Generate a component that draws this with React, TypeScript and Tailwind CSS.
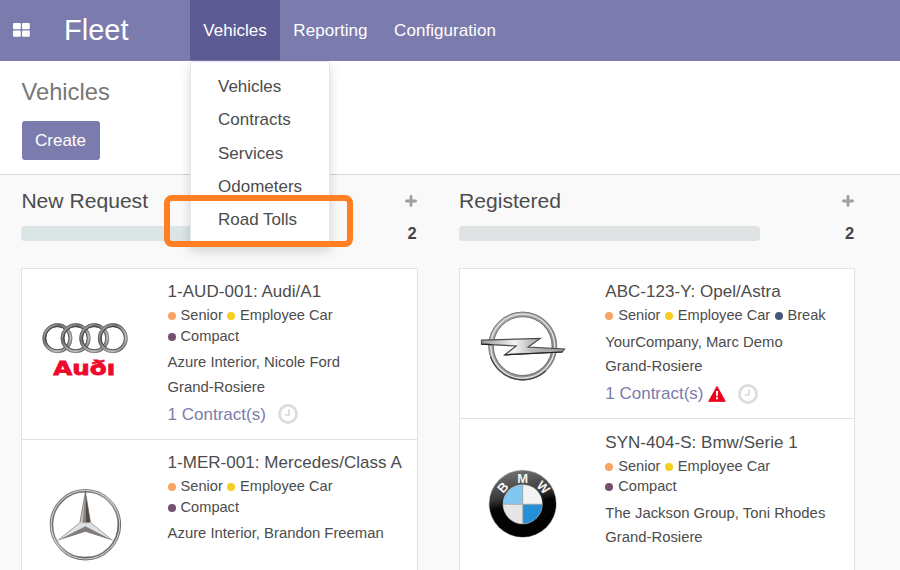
import React from "react";

type Tag = { label: string; color: string };
type Vehicle = {
  title: string;
  tags: Tag[];
  driver: string;
  place: string;
  contract?: boolean;
  alert?: boolean;
  logo: React.ReactNode;
  size: string;
};

const senior: Tag = { label: "Senior", color: "bg-[#f9a464]" };
const employee: Tag = { label: "Employee Car", color: "bg-[#f7cd1f]" };
const compact: Tag = { label: "Compact", color: "bg-[#774f70]" };
const breakTag: Tag = { label: "Break", color: "bg-[#475577]" };

function AudiLogo() {
  return (
    <svg width="128" height="128" viewBox="0.8 0.6 128 128" className="block">
      <defs>
        <linearGradient id="ring" x1="0" y1="0" x2="1" y2="1">
          <stop offset="0" stopColor="#a5a5a5" />
          <stop offset="0.3" stopColor="#555" />
          <stop offset="0.5" stopColor="#8a8a8a" />
          <stop offset="0.75" stopColor="#b5b5b5" />
          <stop offset="1" stopColor="#3c3c3c" />
        </linearGradient>
      </defs>
      {[36.2, 54.4, 73, 91.6].map((cx) => (
        <g key={cx} fill="none">
          <circle cx={cx} cy="47.8" r="13.1" stroke="url(#ring)" strokeWidth="3.6" />
          <circle cx={cx} cy="47.8" r="11.6" stroke="#333" strokeWidth="0.8" />
          <circle cx={cx} cy="47.8" r="13.4" stroke="#ddd" strokeWidth="0.6" opacity="0.6" />
          <circle cx={cx} cy="47.8" r="14.6" stroke="#666" strokeWidth="0.6" />
        </g>
      ))}
      <text
        x="32"
        y="84.9"
        textLength="62"
        lengthAdjust="spacingAndGlyphs"
        fontFamily="DejaVu Sans, sans-serif"
        fontWeight="700"
        fontSize="20"
        fill="#ee0a2c"
        stroke="#ee0a2c"
        strokeWidth="0.8"
      >
        Auðı
      </text>
    </svg>
  );
}

function MercedesLogo() {
  return (
    <svg width="128" height="128" viewBox="0.3 0.3 128 128" className="block">
      <defs>
        <linearGradient id="mring" x1="0" y1="0" x2="0.9" y2="1">
          <stop offset="0" stopColor="#8d8d8d" />
          <stop offset="0.25" stopColor="#77716d" />
          <stop offset="0.5" stopColor="#a5a5a5" />
          <stop offset="0.8" stopColor="#66605d" />
          <stop offset="1" stopColor="#999" />
        </linearGradient>
      </defs>
      <circle cx="63.7" cy="63" r="33.9" fill="none" stroke="url(#mring)" strokeWidth="3.6" />
      <circle cx="63.7" cy="63" r="34.3" fill="none" stroke="#d5d9dc" strokeWidth="1" />
      <path d="M63.7 30 L58.2 60.8 L63.7 63 Z" fill="#c4c1bf" />
      <path d="M63.7 30 L68.8 60.8 L63.7 63 Z" fill="#514b48" />
      <path d="M63.7 30 L61 61 L63.7 63 Z" fill="#85807c" />
      <path d="M36 78.8 L58.2 60.8 L68.8 60.8 L91 78.8 L63.7 69.5 Z" fill="#c5c6c8" />
      <path d="M36 78.8 L58.2 60.8 L63.7 62.2 L68.8 60.8 L91 78.8 L63.7 65.2 Z" fill="#dfe2e4" />
      <path d="M36 78.8 L63.7 64.6 L91 78.8 L63.7 70 Z" fill="#827d7a" />
      <path d="M36 78.8 L58.2 60.8 M68.8 60.8 L91 78.8" stroke="#97928e" strokeWidth="0.8" />
      <path d="M63.7 30 L58.2 60.8 M63.7 30 L68.8 60.8" stroke="#57514e" strokeWidth="0.6" />
    </svg>
  );
}

function OpelLogo() {
  return (
    <svg width="128" height="128" viewBox="0.3 0 128 128" className="block">
      <defs>
        <linearGradient id="oring" x1="0" y1="0" x2="1" y2="1">
          <stop offset="0" stopColor="#b5b5b5" />
          <stop offset="0.5" stopColor="#989898" />
          <stop offset="1" stopColor="#8c8c8c" />
        </linearGradient>
        <linearGradient id="bolt" x1="0" y1="0" x2="1" y2="0">
          <stop offset="0" stopColor="#9a9a9a" />
          <stop offset="0.4" stopColor="#f3f3f3" />
          <stop offset="0.6" stopColor="#bbb" />
          <stop offset="1" stopColor="#999" />
        </linearGradient>
      </defs>
      <g fill="none">
        <circle cx="63" cy="55.1" r="31.8" stroke="url(#oring)" strokeWidth="5" />
        <circle cx="63" cy="55.1" r="34" stroke="#777" strokeWidth="0.9" />
        <circle cx="63" cy="55.1" r="32" stroke="#e2e2e2" strokeWidth="1.3" />
        <circle cx="63" cy="55.1" r="29.4" stroke="#666" strokeWidth="0.9" />
        <path d="M31 66 A34 34 0 0 0 86 80" stroke="#444" strokeWidth="1.1" />
      </g>
      <path
        d="M21.8 49.2 L80.5 47.4 L68.5 56 L104.8 58 L102.6 61 L45 63.8 L56.5 55 L21.8 53.2 Z"
        fill="url(#bolt)"
        stroke="#4b4b4b"
        strokeWidth="1.2"
        strokeLinejoin="miter"
      />
      <path d="M45 63.8 L102.6 61 M21.8 53.2 L32 53.7" stroke="#222" strokeWidth="1.2" />
    </svg>
  );
}

function BmwLogo() {
  return (
    <svg width="128" height="128" viewBox="0.3 0.5 128 128" className="block">
      <defs>
        <linearGradient id="bmwBlack" x1="0.2" y1="0" x2="0.4" y2="1">
          <stop offset="0" stopColor="#777" />
          <stop offset="0.4" stopColor="#383838" />
          <stop offset="0.55" stopColor="#050505" />
          <stop offset="1" stopColor="#000" />
        </linearGradient>
      </defs>
      <circle cx="63" cy="62.2" r="34" fill="#b5b5b5" />
      <circle cx="63" cy="62.2" r="33.3" fill="url(#bmwBlack)" />
      <circle cx="63" cy="62.7" r="20" fill="#aaa" />
      <path d="M62.5 62.2 V43.4 A19.3 19.3 0 0 0 43.6 62.2 Z" fill="#80c8f1" />
      <path d="M63.5 62.2 V43.4 A19.3 19.3 0 0 1 82.4 62.2 Z" fill="#f3f3f3" />
      <path d="M62.5 63.2 V82 A19.3 19.3 0 0 1 43.6 63.2 Z" fill="#e6e6e6" />
      <path d="M63.5 63.2 V82 A19.3 19.3 0 0 0 82.4 63.2 Z" fill="#2590d8" />
      <g fill="#f5f5f5" fontFamily="Liberation Sans, Arial, sans-serif" fontWeight="700" fontSize="13" textAnchor="middle">
        <text transform="translate(46.4 49) rotate(-48)">B</text>
        <text x="63" y="41.2">M</text>
        <text transform="translate(80.4 49.2) rotate(45)">W</text>
      </g>
    </svg>
  );
}

function Clock() {
  return (
    <svg width="20" height="20" viewBox="0 0 20 20" fill="none" stroke="#dcdcdc" className="block">
      <circle cx="10" cy="10" r="8.6" strokeWidth="2.8" />
      <path d="M11 5.2 V10.8 H6.8" strokeWidth="1.8" />
    </svg>
  );
}

function Warning() {
  return (
    <svg width="18" height="16" viewBox="0 0 18 16" className="block">
      <path d="M9 0.3 L17.4 15.4 H0.6 Z" fill="#f0001c" stroke="#f0001c" strokeWidth="0.8" strokeLinejoin="round" />
      <path d="M7.9 4.9 H10.1 L9.8 10.2 H8.2 Z M8 11.3 H10 V13.3 H8 Z" fill="#fff" />
    </svg>
  );
}

function Plus() {
  return (
    <svg width="12" height="12" viewBox="0 0 12 12" className="mr-[0.8px] block">
      <path d="M6 1.4 V10.6 M1.4 6 H10.6" stroke="#9f9f9f" strokeWidth="2.8" strokeLinecap="round" />
    </svg>
  );
}

function Card({ v }: { v: Vehicle }) {
  return (
    <article className={`flex shrink-0 border-b border-[#dde4e8] ${v.size}`}>
      <div className="w-[145.2px] shrink-0 pt-[22.5px]">{v.logo}</div>
      <div className="min-w-0 flex-1 pt-[11.8px] text-[#4c4c4c]">
        <h3 className="whitespace-nowrap text-[17px] leading-[24px] tracking-[0.03px]">{v.title}</h3>
        <div className="mt-[0.9px] flex w-[232px] flex-wrap text-[14.6px] leading-[20.5px]">
          {v.tags.map((t) => (
            <span key={t.label} className="mr-[4.3px] flex items-center whitespace-nowrap">
              <i className={`mr-[5px] mt-[2px] size-[8px] rounded-full ${t.color}`} />
              {t.label}
            </span>
          ))}
        </div>
        <div className="mt-1 whitespace-nowrap text-[14.85px] leading-[24.7px]">
          <p>{v.driver}</p>
          <p>{v.place}</p>
        </div>
        {v.contract && (
          <div className="flex h-[30.5px] items-center text-[17px] leading-[30.5px] text-[#7c7bad]">
            1 Contract(s)
            {v.alert && (
              <span className="ml-[4px] -mt-px">
                <Warning />
              </span>
            )}
            <span className="ml-[12.5px] -mt-px">
              <Clock />
            </span>
          </div>
        )}
      </div>
    </article>
  );
}

function Column({ name, bar, vehicles }: { name: string; bar: string; vehicles: Vehicle[] }) {
  return (
    <section className="flex w-[396.2px] shrink-0 flex-col">
      <header className="flex h-[33px] items-center justify-between pt-px">
        <h2 className="text-[21.1px] leading-[26px] text-[#4c4c4c]">{name}</h2>
        <Plus />
      </header>
      <div className="flex h-[34px] items-center justify-between">
        <div className={`h-[15px] w-[300.5px] rounded-[4px] ${bar}`} />
        <b className="-mt-px mr-[1px] text-[16.5px] leading-[20px] text-[#444]">2</b>
      </div>
      <div className="mt-[17px] flex h-[320px] flex-col overflow-hidden border border-[#dbe5e8] bg-white">
        {vehicles.map((v) => (
          <Card key={v.title} v={v} />
        ))}
      </div>
    </section>
  );
}

const requested: Vehicle[] = [
  {
    title: "1-AUD-001: Audi/A1",
    tags: [senior, employee, compact],
    driver: "Azure Interior, Nicole Ford",
    place: "Grand-Rosiere",
    contract: true,
    logo: <AudiLogo />,
    size: "h-[171px]",
  },
  {
    title: "1-MER-001: Mercedes/Class A",
    tags: [senior, employee, compact],
    driver: "Azure Interior, Brandon Freeman",
    place: "",
    logo: <MercedesLogo />,
    size: "h-[171px]",
  },
];

const registered: Vehicle[] = [
  {
    title: "ABC-123-Y: Opel/Astra",
    tags: [senior, employee, breakTag],
    driver: "YourCompany, Marc Demo",
    place: "Grand-Rosiere",
    contract: true,
    alert: true,
    logo: <OpelLogo />,
    size: "h-[150.5px]",
  },
  {
    title: "SYN-404-S: Bmw/Serie 1",
    tags: [senior, employee, compact],
    driver: "The Jackson Group, Toni Rhodes",
    place: "Grand-Rosiere",
    logo: <BmwLogo />,
    size: "h-[171px]",
  },
];

export default function App() {
  return (
    <div className="relative flex h-[570px] w-[900px] flex-col overflow-hidden bg-[#f9f9f9] font-['Liberation_Sans',Arial,sans-serif]">
      <nav className="flex h-[61px] shrink-0 items-stretch bg-[#7c7bad] text-[17px] text-white">
        <div className="flex w-[190px] items-center pl-[13px]">
          <svg width="17" height="14" viewBox="0 0 17 14" fill="#fff" className="-mt-[2px] block">
            <rect x="0" y="0" width="7.8" height="6.3" rx="1" />
            <rect x="9" y="0" width="7.8" height="6.3" rx="1" />
            <rect x="0" y="7.5" width="7.8" height="6.3" rx="1" />
            <rect x="9" y="7.5" width="7.8" height="6.3" rx="1" />
          </svg>
          <span className="ml-[34px] text-[29px]">Fleet</span>
        </div>
        <a className="flex h-[60px] w-[90px] items-center justify-center bg-[#5d5b94] pt-[1.5px]">Vehicles</a>
        <a className="flex h-[60px] items-center pl-[13.3px] pt-[1.5px] tracking-[0.06px]">Reporting</a>
        <a className="flex h-[60px] items-center pl-[26.5px] pt-[1.5px] tracking-[0.06px]">Configuration</a>
      </nav>
      <header className="flex h-[114px] shrink-0 flex-col items-start border-b border-[#d5d5d5] bg-white pl-[21.5px] pt-[17px]">
        <h1 className="text-[23.7px] leading-[28px] text-[#777]">Vehicles</h1>
        <button className="mt-[15px] h-[39px] w-[78px] rounded-[3px] bg-[#7c7bad] text-[17px] text-white">Create</button>
      </header>
      <main className="flex gap-[41.5px] pl-[21.4px] pt-[8.5px]">
        <Column name="New Request" bar="bg-[#dce5e5]" vehicles={requested} />
        <Column name="Registered" bar="bg-[#e0e3e3]" vehicles={registered} />
      </main>
      <ul className="absolute left-[190px] top-[61px] h-[184px] w-[140px] rounded-[3px] border border-[#e5e5ea] bg-white pl-[27px] pt-[8px] text-[17px] leading-[33.3px] text-[#4c4c4c] shadow-[0_6px_12px_rgba(0,0,0,0.16)]">
        <li>Vehicles</li>
        <li>Contracts</li>
        <li>Services</li>
        <li>Odometers</li>
        <li>Road Tolls</li>
      </ul>
      <div className="absolute left-[164px] top-[195px] h-[52px] w-[189px] rounded-[8px] border-[6px] border-[#ff7f22]" />
    </div>
  );
}
